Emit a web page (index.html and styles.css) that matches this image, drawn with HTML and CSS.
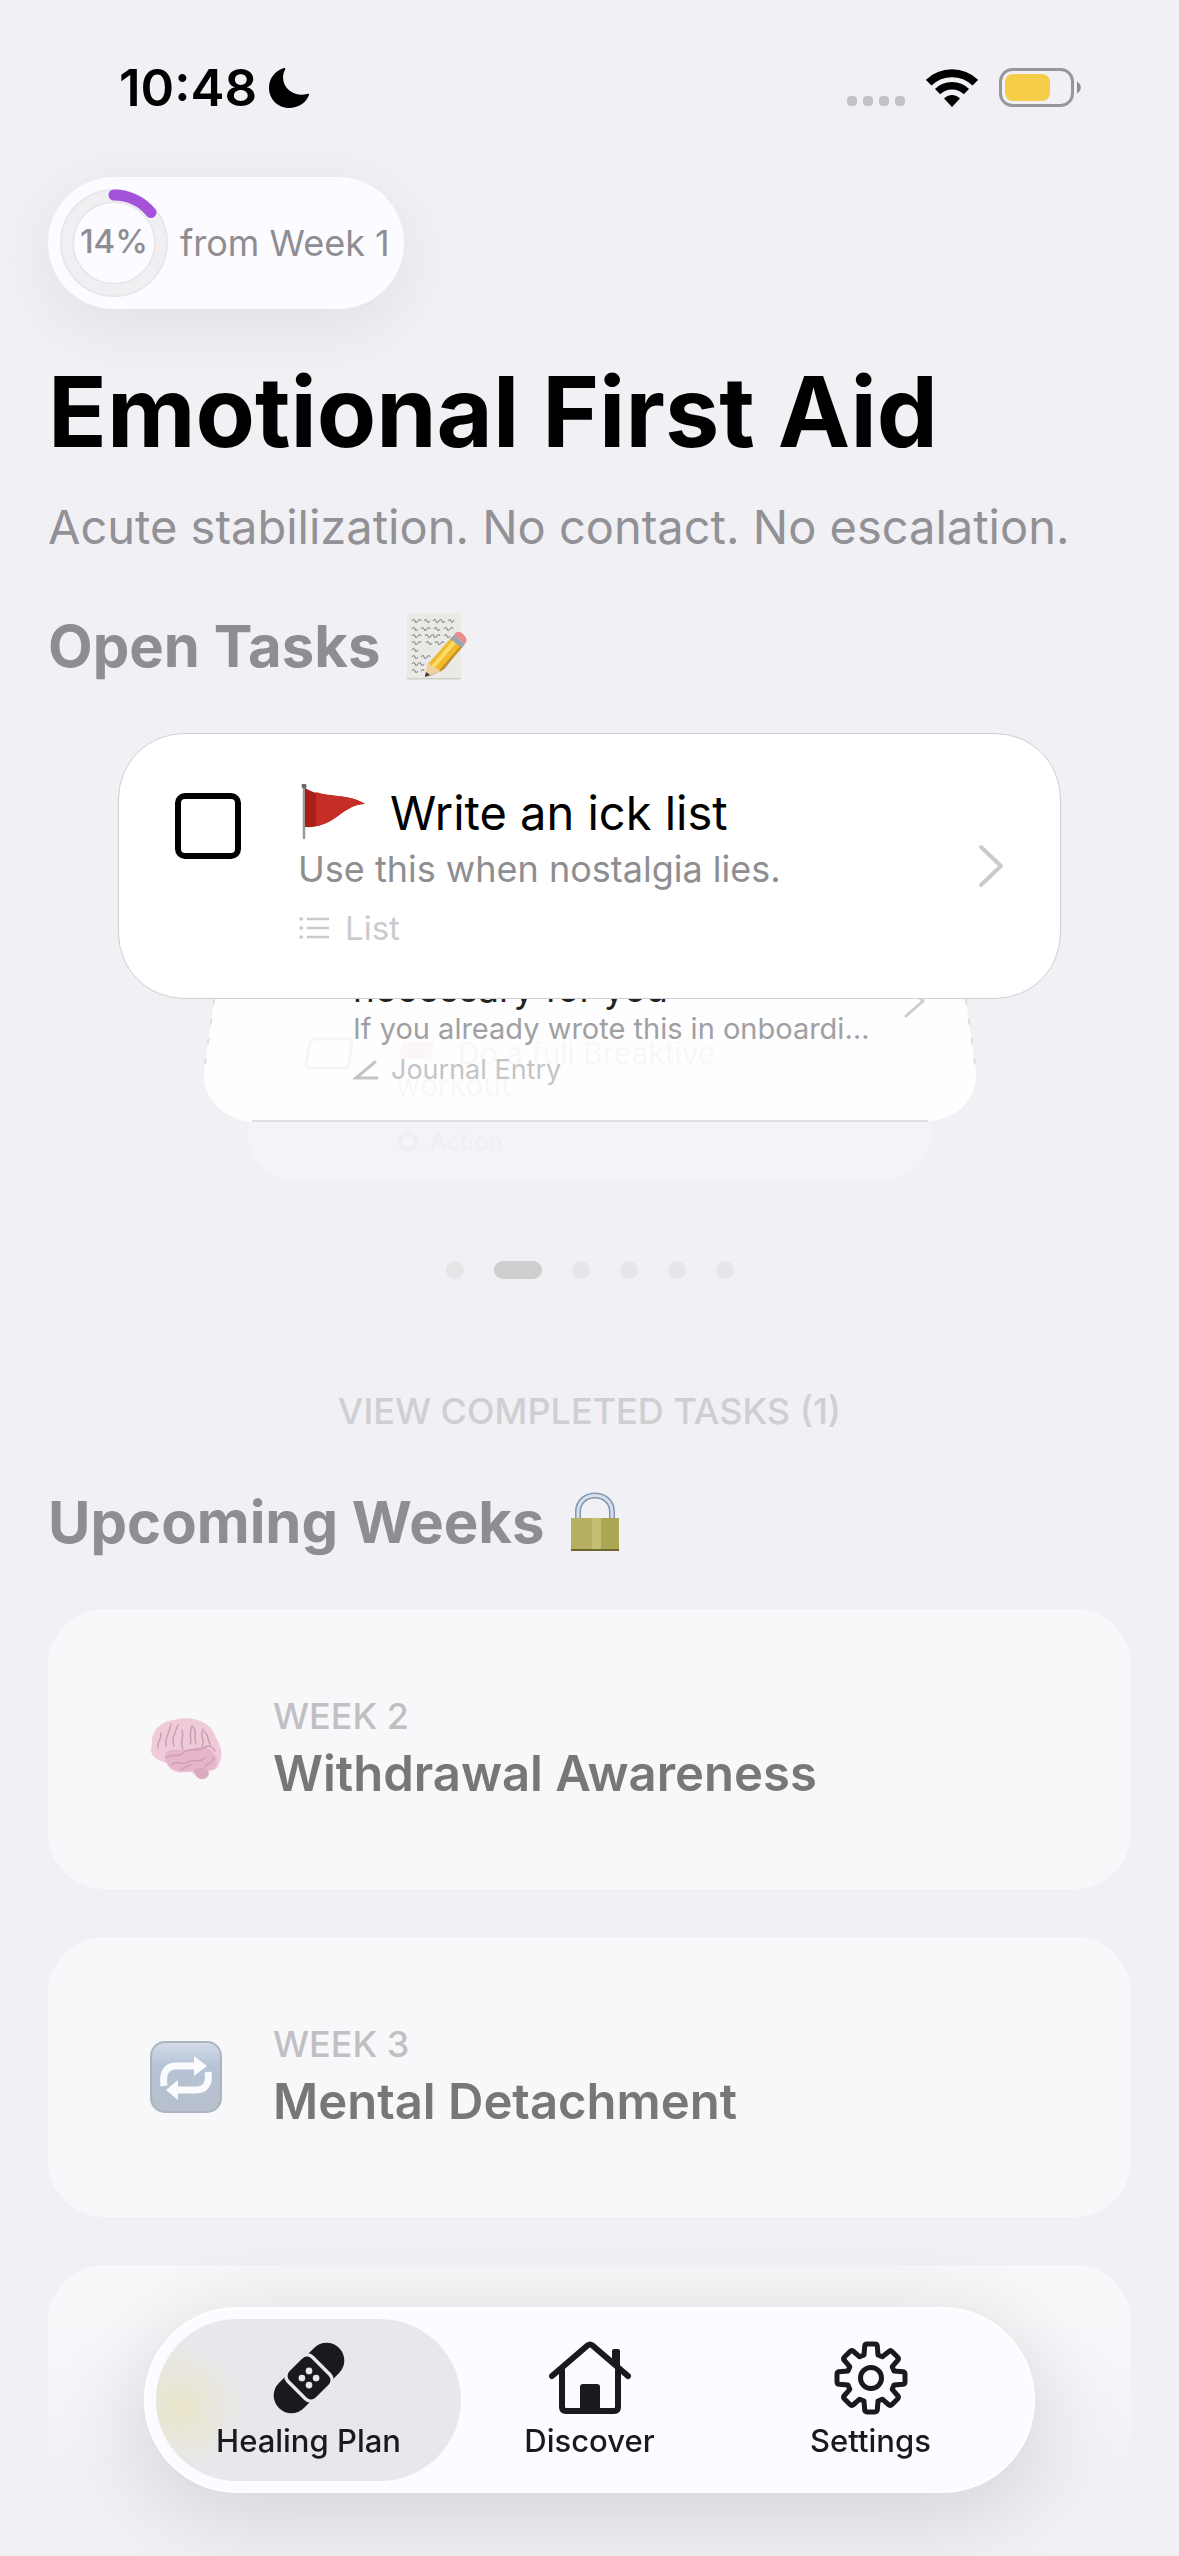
FILE: index.html
```html
<!DOCTYPE html>
<html lang="en">
<head>
<meta charset="utf-8">
<meta name="viewport" content="width=device-width, initial-scale=1">
<title>Healing Plan</title>
<link rel="stylesheet" href="styles.css">
</head>
<body>
<header class="status">
  <div class="status-time">
    <span>10:48</span>
    <svg width="40" height="40" viewBox="0 0 40 40" aria-hidden="true"><path d="M15 0C6 3 0 10 0 20c0 11 9 20 20 20 9 0 17-5 20-13 .5-1.500-1-1.500-2-1-11 3-24-4-24-17 0-3 1-5 2-7 .5-1.500 0-2.500-1-2z"/></svg>
  </div>
  <div class="status-icons">
    <div class="signal"><i></i><i></i><i></i><i></i></div>
    <svg width="52" height="38" viewBox="0 0 52 38" aria-hidden="true"><g fill="none" stroke="#000"><path stroke-width="8" d="M2.700 13.700a33.300 33.300 0 0 1 46.600 0"/><path stroke-width="7.500" d="M11.600 22.600a20.500 20.500 0 0 1 28.800 0"/></g><path d="M26 38l-8-8.500c4.500-4.700 11.500-4.700 16 0z"/></svg>
    <svg width="84" height="40" viewBox="0 0 84 40" aria-hidden="true"><rect x="1.500" y="1.500" width="72" height="36" rx="12" fill="none" stroke="#97969b" stroke-width="3"/><rect x="6" y="6" width="45" height="27" rx="8" fill="#f6cd46"/><path d="M78 13.500c5 3 5 9 0 12z" fill="#8e8d92"/></svg>
  </div>
</header>

<main class="page">
  <button class="progress" type="button">
    <span class="ring">
      <svg width="108" height="108" viewBox="0 0 108 108" aria-hidden="true"><circle cx="54" cy="54" r="47" fill="none" stroke="#e6e6ea" stroke-width="14"/><circle cx="54" cy="54" r="47" fill="none" stroke="#f0f0f3" stroke-width="11"/><path d="M54 6a48 48 0 0 1 37 17.500" fill="none" stroke="#a452da" stroke-width="11" stroke-linecap="round"/></svg>
      <span class="ring-value">14%</span>
    </span>
    <span>from Week 1</span>
  </button>

  <h1>Emotional First Aid</h1>
  <p class="lead">Acute stabilization. No contact. No escalation.</p>

  <h2>Open Tasks
    <svg width="62" height="68" viewBox="0 0 62 68" aria-hidden="true">
      <path d="M1 1h54v66H1z" fill="#e9e9e6"/><path d="M1 66h54v1.500H1z" fill="#cfcfcc"/>
      <g fill="none" stroke="#8a8a8c" stroke-width="1.100"><path d="M6 9q2-3 3 0t3 0 3 0M18 9q2-3 3 0t3 0M27 9q2-3 3 0t3 0 3 0 3 0M42 9q2-3 3 0t3-1"/><path d="M6 17q2-3 3 0t3 0M15 17q2-3 3 0t3 0 3 0M28 17q2-3 3 0t3 0M38 17q2-3 3 0t3 0 3 0"/><path d="M6 24q2-3 3 0t3 0 3 0M19 24q2-3 3 0t3 0 3 0 3 0 3 0M38 24q2-3 3 0t3 0"/><path d="M6 31q2-3 3 0t3 0 3 0M20 31q2-3 3 0t3 0M29 31q2-3 3 0t3 0 3 0"/><path d="M6 38q2-3 3 0t3 0"/><path d="M6 45q2-3 3 0t3 0M15 45q2-3 3 0t3 0 3 0"/><path d="M6 52q2-3 3 0t3 0 3 0 3 0"/><path d="M6 59q2-3 3 0t3 0M15 59q2-3 3 0"/></g>
      <path d="M22 65l17-8 20-27-6 2z" fill="#000" opacity=".25"/>
      <path d="M19 65l3-13 24-27 11 9-23 25z" fill="#f0b92e"/><path d="M26 56l24-28" stroke="#ffdc66" stroke-width="4"/><path d="M34 59l22-25" stroke="#c98d14" stroke-width="2"/>
      <path d="M19 65l3-13c2 0 3 1 4 3 3 0 5 1 8 4z" fill="#edd2a0"/><path d="M19 65l1-5 4 3z" fill="#333"/>
      <path d="M44 27l4-4 11 9-3 4z" fill="#9aa5ae"/><path d="M48 23c2-4 6-4 9-1s5 6 2 10z" fill="#e98c8f"/>
    </svg>
  </h2>

  <section class="deck" aria-label="Open tasks">
    <article class="card-front">
      <input type="checkbox" id="ick">
      <div class="card-body">
        <label class="card-title" for="ick">
          <svg width="68" height="58" viewBox="0 0 68 58" aria-hidden="true"><path d="M6 1v54" stroke="#9a9a9c" stroke-width="2.500"/><circle cx="6" cy="2" r="2.500" fill="#6b6b6d"/><path d="M7 4c11 7 22 7 33 8 10 1 19 3 27 8-12 0-20 7-30 14-9 6-19 10-30 9z" fill="#a92019"/><path d="M18 8c9 3 17 3 22 4 10 1 19 3 27 8-12 0-20 7-30 14-7 5-13 7-19 8z" fill="#c52e26"/></svg>
          Write an ick list
        </label>
        <p class="card-note">Use this when nostalgia lies.</p>
        <p class="card-kind">
          <svg width="32" height="24" viewBox="0 0 32 24" aria-hidden="true"><g stroke="#cbcbcd" stroke-width="2.500" stroke-linecap="round"><path d="M10 3h20M10 12h20M10 21h20"/><path d="M3 3h.5M3 12h.5M3 21h.5" stroke-width="3.500"/></g></svg>
          List
        </p>
      </div>
      <svg class="chevron" width="26" height="44" viewBox="0 0 26 44" aria-hidden="true"><path d="M3 3l20 19L3 41" fill="none" stroke="#cbcbcd" stroke-width="4" stroke-linecap="round" stroke-linejoin="round"/></svg>
    </article>

    <article class="card-next">
      <svg class="card-shape" viewBox="0 0 775 144" preserveAspectRatio="none" aria-hidden="true"><path d="M15 0L2 92C0 120 22 143 56 143H719C753 143 775 120 773 92L760 0Z" fill="#fff" fill-opacity=".9"/><path d="M50 142H725" stroke="#dfdfe2" stroke-width="2"/><path d="M15 0L2 92M760 0l13 92" stroke="#dededf" stroke-width="2" stroke-dasharray="6 14"/></svg>
      <div class="next-body">
        <p class="next-title">necessary for you</p>
        <p class="next-note">If you already wrote this in onboardi…</p>
        <p class="next-kind">
          <svg width="26" height="20" viewBox="0 0 26 20" aria-hidden="true"><path d="M22 2L3 18h21" fill="none" stroke="#c4c4c6" stroke-width="3" stroke-linecap="round"/></svg>
          Journal Entry
        </p>
      </div>
      <svg class="next-chevron" width="22" height="40" viewBox="0 0 22 40" aria-hidden="true"><path d="M2 5l17 15L2 35" fill="none" stroke="#cdcdcf" stroke-width="3" stroke-linecap="round"/></svg>
    </article>

    <article class="card-later">
      <svg width="50" height="34" viewBox="0 0 50 34" aria-hidden="true"><path d="M10 2h34q4 0 4 4l-3 21q-1 4-5 4H6q-4 0-4-4L6 6q1-4 4-4z" fill="none" stroke="#9c9ca0" stroke-width="3"/></svg>
      <div class="later-body">
        <p class="later-title"><svg width="42" height="24" viewBox="0 0 42 24" aria-hidden="true"><path d="M2 22L8 4h30l-4 18z" fill="#d9a8a8"/></svg> Do a full Breaktive</p>
        <p class="later-title">workout</p>
        <p class="later-kind"><svg width="24" height="22" viewBox="0 0 24 22" aria-hidden="true"><circle cx="12" cy="11" r="8" fill="none" stroke="#eeeef2" stroke-width="4"/></svg> Action</p>
      </div>
    </article>
  </section>

  <div class="dots">
    <button type="button" aria-label="Task 1"></button>
    <button type="button" aria-label="Task 2" class="current"></button>
    <button type="button" aria-label="Task 3"></button>
    <button type="button" aria-label="Task 4"></button>
    <button type="button" aria-label="Task 5"></button>
    <button type="button" aria-label="Task 6"></button>
  </div>

  <button class="completed" type="button">VIEW COMPLETED TASKS (1)</button>

  <h2>Upcoming Weeks
    <svg width="50" height="60" viewBox="0 0 50 60" aria-hidden="true">
      <path d="M8 28V20C8 -2 42 -2 42 20V28" fill="none" stroke="#8496ab" stroke-width="6"/><path d="M8 28V20C8 -2 42 -2 42 20V28" fill="none" stroke="#d3dff0" stroke-width="3"/>
      <path d="M1 26h48v33H1z" fill="#aaa654"/><path d="M1 26h21v33H1z" fill="#b5b160"/><path d="M22 26h9v33h-9z" fill="#c3c073"/><path d="M1 57h48v2H1z" fill="#6f6530"/>
    </svg>
  </h2>

  <ul class="weeks">
    <li class="week">
      <svg width="72" height="72" viewBox="0 0 72 72" aria-hidden="true">
        <path d="M2 30C1 17 12 8 24 7c10-3 22-2 30 3 7 3 10 9 12 15 6 8 7 18 3 26-1 5-6 7-10 7 1 4-1 7-5 8-5 1-7-2-10-5-2-2-5-2-8-2-8 2-17-1-19-9C9 48 1 44 1 37z" fill="#efcad8"/>
        <path d="M15 42c3-6 10-6 16-5 9 1 15-3 22-3 8 1 14 8 14 16-1 5-5 7-9 7-5 0-9-1-13-1-6 3-13 4-19 1-7-2-12-8-11-15z" fill="#e5b6ca"/>
        <path d="M43 57c3-2 11-3 15 0 1 4 0 8-5 9s-8-4-10-9z" fill="#d9abbd"/>
        <g fill="none" stroke="#cd9fb2" stroke-width="1.500" stroke-linecap="round"><path d="M8 35c-1-7 4-9 3-15M16 33c-2-8 4-13 5-22M24 33c-3-7 1-13 4-21M33 36c-4-8 2-11-1-19M40 31c3-4-2-10 2-18M46 31c-3-6 2-11-3-17M52 33c4-6-3-9 1-17M60 31c-3-5-1-9-6-13M16 45c6-6 12 1 17-5s13-1 20-5 9-2 12 3M22 51c6-4 10 2 16-2s12 2 17-4M31 57c2-3 7-3 10-6M55 54c2-4 8-3 9-9"/></g>
      </svg>
      <div>
        <p class="week-label">WEEK 2</p>
        <h3>Withdrawal Awareness</h3>
      </div>
    </li>
    <li class="week">
      <svg width="72" height="72" viewBox="0 0 72 72" aria-hidden="true">
        <defs><linearGradient id="tile" x1="0" y1="0" x2="0" y2="1"><stop offset="0" stop-color="#d3dce8"/><stop offset=".35" stop-color="#b6c3d6"/><stop offset="1" stop-color="#b7bfcb"/></linearGradient></defs>
        <rect x="1" y="1" width="70" height="70" rx="14" fill="url(#tile)" stroke="#acb5c2" stroke-width="2"/>
        <g fill="none" stroke="#fafbfd" stroke-width="7"><path d="M14 45C12 31 17 25 26 25h19"/><path d="M58 31c2 12-3 18-12 18H28"/></g>
        <path d="M44 15l13 10-13 10zM28 39L16 49l12 10z" fill="#fafbfd"/>
      </svg>
      <div>
        <p class="week-label">WEEK 3</p>
        <h3>Mental Detachment</h3>
      </div>
    </li>
    <li class="week week-hidden"></li>
  </ul>
</main>

<nav class="tabs" aria-label="Main">
  <a class="tab active" href="#plan" aria-current="page">
    <svg width="72" height="74" viewBox="0 0 71 71" aria-hidden="true"><g transform="translate(35.500 35.500) rotate(-45)"><rect x="-42" y="-17.500" width="84" height="35" rx="17.500" fill="#1a1a1e"/><rect x="-17" y="-20" width="34" height="40" rx="8" fill="#1a1a1e" stroke="#e9e9ec" stroke-width="3.500"/><rect x="-15" y="-17.500" width="30" height="35" rx="5" fill="#1a1a1e"/></g><g fill="#e9e9ec"><circle cx="35.500" cy="28.500" r="3.300"/><circle cx="35.500" cy="42.500" r="3.300"/><circle cx="28.500" cy="35.500" r="3.300"/><circle cx="42.500" cy="35.500" r="3.300"/></g></svg>
    <span>Healing Plan</span>
  </a>
  <a class="tab" href="#discover">
    <svg width="82" height="74" viewBox="0 0 82 74" aria-hidden="true"><g fill="none" stroke="#1a1a1e" stroke-width="6" stroke-linecap="round" stroke-linejoin="round"><path d="M3 35L38.500 4.500q2.500-2 5 0L79 35"/><path d="M13 29v37q0 4 4 4h48q4 0 4-4V29"/></g><path d="M31 46q0-3 3-3h14q3 0 3 3v26H31zM63 10q0-2 2-2h4q2 0 2 2v20l-8-8z" fill="#1a1a1e"/></svg>
    <span>Discover</span>
  </a>
  <a class="tab" href="#settings">
    <svg width="74" height="74" viewBox="0 0 74 74" aria-hidden="true"><g fill="none" stroke="#1a1a1e" stroke-width="5" stroke-linejoin="round"><path d="M33 3H41Q43 3 43.300 5L44 14L48.300 15.800L55 10.500Q56.500 9 58 10.500L63.500 16Q65 17.500 64 19L58.200 25.700L60 30L69 30.700Q71 31 71 33V41Q71 43 69 43.300L60 44L58.200 48.300L64 55Q65 56.500 63.500 58L58 63.500Q56.500 65 55 64L48.300 58.200L44 60L43.300 69Q43 71 41 71H33Q31 71 30.700 69L30 60L25.700 58.200L19 64Q17.500 65 16 63.500L10.500 58Q9 56.500 10 55L15.800 48.300L14 44L5 43.300Q3 43 3 41V33Q3 31 5 30.700L14 30L15.800 25.700L10 19Q9 17.500 10.500 16L16 10.500Q17.500 9 19 10L25.700 15.800L30 14L30.700 5Q31 3 33 3Z"/><circle cx="37" cy="37" r="10.500"/></g></svg>
    <span>Settings</span>
  </a>
</nav>
</body>
</html>
```
FILE: styles.css
```css
* {
  box-sizing: border-box;
  margin: 0;
}

body {
  background: #f1f0f5;
  color: #000;
  font-family: Inter, "Liberation Sans", sans-serif;
}

svg {
  display: block;
  flex: none;
}

button {
  border: 0;
  padding: 0;
  background: none;
  color: inherit;
  font: inherit;
}

/* Status bar */
.status {
  display: flex;
  justify-content: space-between;
  align-items: center;
  padding: 58px 96px 0 119px;
}

.status-time {
  display: flex;
  align-items: center;
  gap: 12px;
  font-size: 51px;
  font-weight: 600;
  line-height: 60px;
}

.status-icons {
  display: flex;
  align-items: center;
  gap: 21px;
}

.signal {
  display: flex;
  gap: 6px;
  padding-top: 26px;
}

.signal i {
  width: 10px;
  height: 10px;
  border-radius: 4px;
  background: #c3c2c7;
}

/* Page */
.page {
  padding: 59px 48px 12px;
}

.progress {
  display: flex;
  align-items: center;
  gap: 12px;
  height: 132px;
  padding: 0 14px 0 12px;
  border-radius: 66px;
  background: #fcfbff;
  box-shadow: 0 16px 72px rgba(0, 0, 0, 0.07);
  color: #8e8d92;
  font-size: 36px;
  line-height: 44px;
}

.ring {
  display: grid;
  place-items: center;
}

.ring svg,
.ring-value {
  grid-area: 1 / 1;
}

.ring-value {
  padding-bottom: 4px;
  font-size: 33px;
  font-weight: 500;
}

h1 {
  margin-top: 43px;
  font-size: 97px;
  font-weight: 700;
  line-height: 120px;
}

.lead {
  margin-top: 25px;
  color: #929196;
  font-size: 47px;
  line-height: 60px;
}

h2 {
  display: flex;
  align-items: center;
  gap: 26px;
  margin-top: 53px;
  color: #8e8d92;
  font-size: 58px;
  font-weight: 700;
  line-height: 72px;
}

/* Task deck: cards share one grid cell and peek out below each other */
.deck {
  display: grid;
  align-items: start;
  margin-top: 51px;
}

.deck > article {
  grid-area: 1 / 1;
  display: flex;
}

.card-front {
  z-index: 3;
  align-items: flex-start;
  margin: 0 70px;
  padding: 50px 56px;
  border: 1px solid #cfcfd2;
  border-radius: 66px;
  background: #fff;
}

.card-front input {
  appearance: none;
  flex: none;
  width: 66px;
  height: 66px;
  margin: 9px 57px 0 0;
  border: 6px solid #000;
  border-radius: 10px;
}

.card-body {
  flex: 1;
}

.card-title {
  display: flex;
  align-items: center;
  gap: 24px;
  font-size: 47px;
  line-height: 58px;
}

.card-note {
  margin-top: 5px;
  color: #8e8e90;
  font-size: 36px;
  line-height: 44px;
}

.card-kind {
  display: flex;
  align-items: center;
  gap: 15px;
  margin-top: 17px;
  color: #cbcbcd;
  font-size: 33px;
  line-height: 40px;
}

.chevron {
  align-self: center;
}

.card-next {
  z-index: 2;
  position: relative;
  align-items: flex-start;
  margin: 234px 153px 0 154px;
  padding: 0 52px 37px 151px;
}

.card-shape {
  position: absolute;
  left: 0;
  bottom: 0;
  width: 100%;
  height: 144px;
}

.next-body {
  position: relative;
  flex: 1;
}

.next-title {
  font-size: 37px;
  line-height: 44px;
  color: #222;
}

.next-note {
  margin-top: 2px;
  color: #a0a0a2;
  font-size: 29px;
  line-height: 32px;
}

.next-kind {
  display: flex;
  align-items: center;
  gap: 12px;
  margin-top: 9px;
  color: #c4c4c6;
  font-size: 27px;
  line-height: 32px;
}

.next-chevron {
  position: relative;
  margin-top: 14px;
}

.card-later {
  align-items: flex-start;
  gap: 42px;
  margin: 300px 200px 0;
  padding: 4px 56px 20px;
  border-radius: 44px;
  background: #f4f4f8;
}

.later-body {
  color: #b0b0b4;
}

.later-title {
  display: flex;
  gap: 20px;
  font-size: 30px;
  line-height: 32px;
}

.later-kind {
  display: flex;
  align-items: center;
  gap: 10px;
  margin-top: 24px;
  color: #eeeef2;
  font-size: 24px;
  line-height: 34px;
}

.dots {
  display: flex;
  justify-content: center;
  gap: 30px;
  margin-top: 82px;
}

.dots button {
  width: 18px;
  height: 18px;
  border-radius: 9px;
  background: #e6e6e9;
}

.dots .current {
  width: 48px;
  background: #cfcfd0;
}

.completed {
  display: block;
  margin: 110px auto 0;
  color: #cfcfd2;
  font-size: 36px;
  font-weight: 500;
  line-height: 44px;
}

/* Upcoming weeks */
.weeks {
  display: grid;
  gap: 48px;
  margin-top: 51px;
  padding: 0;
  list-style: none;
}

.week {
  display: flex;
  align-items: center;
  gap: 51px;
  min-height: 280px;
  padding: 0 102px;
  border-radius: 57px;
  background: #f8f8fb;
}

.week-hidden {
  background: linear-gradient(#f8f8fb 20%, #f1f0f5 75%);
}

.week-label {
  color: #c0c0c3;
  font-size: 36px;
  font-weight: 500;
  line-height: 44px;
}

h3 {
  margin-top: 6px;
  color: #777779;
  font-size: 49px;
  font-weight: 600;
  line-height: 60px;
}

/* Floating tab bar */
.tabs {
  position: fixed;
  right: 144px;
  bottom: 63px;
  left: 144px;
  z-index: 10;
  display: grid;
  grid-template-columns: repeat(3, 1fr);
  height: 186px;
  padding: 10px 22px;
  border: 2px solid #fff;
  border-radius: 93px;
  background: #fcfbff;
  box-shadow: 0 16px 96px rgba(0, 0, 0, 0.14);
}

.tab {
  display: flex;
  flex-direction: column;
  align-items: center;
  justify-content: center;
  gap: 8px;
  border-radius: 81px;
  color: #1a1a1e;
  font-size: 31px;
  font-weight: 500;
  line-height: 36px;
  text-decoration: none;
}

.active {
  margin: 0 -12px;
  background:
    radial-gradient(circle at 24px 88px, #e9e5c8 0, rgba(233, 229, 200, 0) 64px),
    #e8e8ec;
}
```
